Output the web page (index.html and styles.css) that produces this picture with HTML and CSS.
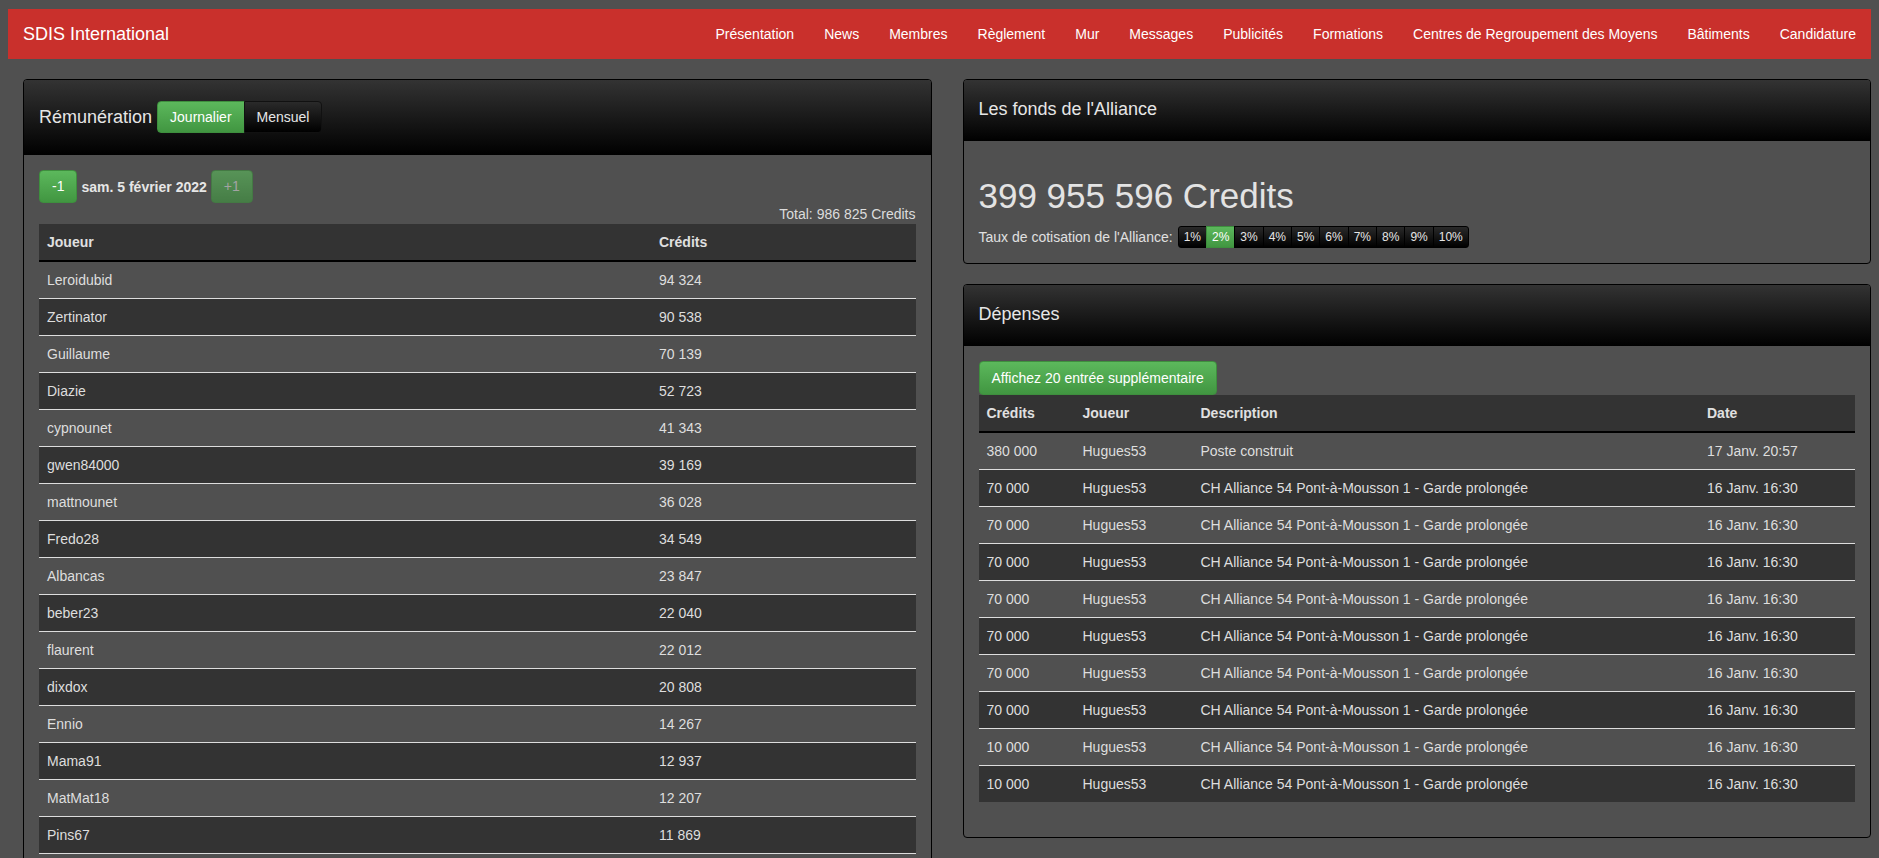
FILE: index.html
```html
<!DOCTYPE html>
<html lang="fr">
<head>
<meta charset="utf-8">
<title>SDIS International</title>
<link rel="stylesheet" href="styles.css">
</head>
<body>
<nav class="navbar">
  <a class="brand" href="#">SDIS International</a>
  <ul class="nav">
    <li><a href="#">Présentation</a></li>
    <li><a href="#">News</a></li>
    <li><a href="#">Membres</a></li>
    <li><a href="#">Règlement</a></li>
    <li><a href="#">Mur</a></li>
    <li><a href="#">Messages</a></li>
    <li><a href="#">Publicités</a></li>
    <li><a href="#">Formations</a></li>
    <li><a href="#">Centres de Regroupement des Moyens</a></li>
    <li><a href="#">Bâtiments</a></li>
    <li><a href="#">Candidature</a></li>
  </ul>
</nav>

<div class="row">
  <div class="col">
    <div class="panel">
      <div class="panel-heading heading-tools">
        <h3 class="panel-title">Rémunération</h3>
        <div class="btn-group">
          <a class="btn btn-success" href="#">Journalier</a>
          <a class="btn btn-dark" href="#">Mensuel</a>
        </div>
      </div>
      <div class="panel-body">
        <div class="day-nav">
          <a class="btn btn-success" href="#">-1</a>
          <strong class="day">sam. 5 février 2022</strong>
          <span class="btn btn-success disabled">+1</span>
        </div>
        <div class="total">Total: 986 825 Credits</div>
        <table class="table table-open">
          <thead>
            <tr><th class="w-player">Joueur</th><th>Crédits</th></tr>
          </thead>
          <tbody>
            <tr><td>Leroidubid</td><td>94 324</td></tr>
            <tr><td>Zertinator</td><td>90 538</td></tr>
            <tr><td>Guillaume</td><td>70 139</td></tr>
            <tr><td>Diazie</td><td>52 723</td></tr>
            <tr><td>cypnounet</td><td>41 343</td></tr>
            <tr><td>gwen84000</td><td>39 169</td></tr>
            <tr><td>mattnounet</td><td>36 028</td></tr>
            <tr><td>Fredo28</td><td>34 549</td></tr>
            <tr><td>Albancas</td><td>23 847</td></tr>
            <tr><td>beber23</td><td>22 040</td></tr>
            <tr><td>flaurent</td><td>22 012</td></tr>
            <tr><td>dixdox</td><td>20 808</td></tr>
            <tr><td>Ennio</td><td>14 267</td></tr>
            <tr><td>Mama91</td><td>12 937</td></tr>
            <tr><td>MatMat18</td><td>12 207</td></tr>
            <tr><td>Pins67</td><td>11 869</td></tr>
          </tbody>
        </table>
      </div>
    </div>
  </div>

  <div class="col">
    <div class="panel">
      <div class="panel-heading">
        <h3 class="panel-title">Les fonds de l'Alliance</h3>
      </div>
      <div class="panel-body">
        <h1 class="funds">399 955 596 Credits</h1>
        <div class="rate">
          <span class="rate-label">Taux de cotisation de l'Alliance:</span>
          <div class="btn-group btn-group-xs">
            <a class="btn btn-dark" href="#">1%</a>
            <a class="btn btn-success" href="#">2%</a>
            <a class="btn btn-dark" href="#">3%</a>
            <a class="btn btn-dark" href="#">4%</a>
            <a class="btn btn-dark" href="#">5%</a>
            <a class="btn btn-dark" href="#">6%</a>
            <a class="btn btn-dark" href="#">7%</a>
            <a class="btn btn-dark" href="#">8%</a>
            <a class="btn btn-dark" href="#">9%</a>
            <a class="btn btn-dark" href="#">10%</a>
          </div>
        </div>
      </div>
    </div>

    <div class="panel">
      <div class="panel-heading">
        <h3 class="panel-title">Dépenses</h3>
      </div>
      <div class="panel-body">
        <a class="btn btn-success btn-more" href="#">Affichez 20 entrée supplémentaire</a>
        <table class="table">
          <thead>
            <tr>
              <th class="w-credits">Crédits</th>
              <th class="w-joueur">Joueur</th>
              <th>Description</th>
              <th class="w-date">Date</th>
            </tr>
          </thead>
          <tbody>
            <tr><td>380 000</td><td>Hugues53</td><td>Poste construit</td><td>17 Janv. 20:57</td></tr>
            <tr><td>70 000</td><td>Hugues53</td><td>CH Alliance 54 Pont-à-Mousson 1 - Garde prolongée</td><td>16 Janv. 16:30</td></tr>
            <tr><td>70 000</td><td>Hugues53</td><td>CH Alliance 54 Pont-à-Mousson 1 - Garde prolongée</td><td>16 Janv. 16:30</td></tr>
            <tr><td>70 000</td><td>Hugues53</td><td>CH Alliance 54 Pont-à-Mousson 1 - Garde prolongée</td><td>16 Janv. 16:30</td></tr>
            <tr><td>70 000</td><td>Hugues53</td><td>CH Alliance 54 Pont-à-Mousson 1 - Garde prolongée</td><td>16 Janv. 16:30</td></tr>
            <tr><td>70 000</td><td>Hugues53</td><td>CH Alliance 54 Pont-à-Mousson 1 - Garde prolongée</td><td>16 Janv. 16:30</td></tr>
            <tr><td>70 000</td><td>Hugues53</td><td>CH Alliance 54 Pont-à-Mousson 1 - Garde prolongée</td><td>16 Janv. 16:30</td></tr>
            <tr><td>70 000</td><td>Hugues53</td><td>CH Alliance 54 Pont-à-Mousson 1 - Garde prolongée</td><td>16 Janv. 16:30</td></tr>
            <tr><td>10 000</td><td>Hugues53</td><td>CH Alliance 54 Pont-à-Mousson 1 - Garde prolongée</td><td>16 Janv. 16:30</td></tr>
            <tr><td>10 000</td><td>Hugues53</td><td>CH Alliance 54 Pont-à-Mousson 1 - Garde prolongée</td><td>16 Janv. 16:30</td></tr>
          </tbody>
        </table>
      </div>
    </div>
  </div>
</div>
</body>
</html>
```

FILE: styles.css
```css
* { box-sizing: border-box; }

html { background: #505050; }

body {
  margin: 8px;
  background: #505050;
  color: #dcdcdc;
  font-family: "Liberation Sans", Arial, sans-serif;
  font-size: 14px;
  line-height: 20px;
}

a { text-decoration: none; color: inherit; }

/* Navbar */
.navbar {
  display: flex;
  align-items: center;
  justify-content: space-between;
  height: 50px;
  margin: 1px -8px 20px 0;
  padding-right: 8px;
  background: #c9302c;
}
.brand {
  padding: 0 15px;
  font-size: 18px;
  line-height: 20px;
  color: #fff;
}
.nav {
  display: flex;
  list-style: none;
  margin: 0;
  padding: 0;
}
.nav a {
  display: block;
  padding: 15px 15px;
  color: #fff;
  line-height: 20px;
}

/* Layout */
.row {
  display: flex;
  align-items: flex-start;
  gap: 31px;
  padding-left: 15px;
}
.col {
  flex: 1 1 0;
  min-width: 0;
}

/* Panels */
.panel {
  border: 1px solid #000;
  border-radius: 4px;
  background: #505050;
  margin-bottom: 20px;
}
.panel-heading {
  padding: 19px 15px 21px;
  background: linear-gradient(to bottom, #333 0%, #000 100%);
  border-radius: 3px 3px 0 0;
}
.heading-tools {
  display: flex;
  align-items: center;
  gap: 5px;
  padding: 21px 15px 22px;
}
.panel-title {
  margin: 0;
  font-size: 18px;
  line-height: 21px;
  font-weight: normal;
  color: #e6e6e6;
}
.panel-body {
  padding: 15px;
}

/* Buttons */
.btn {
  display: inline-block;
  padding: 6px 12px;
  font-size: 14px;
  line-height: 19px;
  border: 1px solid transparent;
  border-radius: 4px;
  color: #fff;
  white-space: nowrap;
}
.btn-success {
  background: linear-gradient(to bottom, #5cb85c 0%, #419641 100%);
  border-color: #3e8f3e;
}
.btn-dark {
  background: linear-gradient(to bottom, #2a2a2a 0%, #000 100%);
  border-color: #111;
  color: #e6e6e6;
}
.btn.disabled {
  opacity: .65;
  color: #d0d0d0;
}
.btn-more {
  line-height: 20px;
}
.btn-group {
  display: inline-flex;
}
.btn-group .btn {
  border-radius: 0;
}
.btn-group .btn + .btn {
  margin-left: -1px;
}
.btn-group .btn:first-child {
  border-radius: 4px 0 0 4px;
}
.btn-group .btn:last-child {
  border-radius: 0 4px 4px 0;
}
.heading-tools .btn {
  padding: 5px 12px;
  line-height: 20px;
}
.btn-group-xs .btn {
  padding: 1px 5px;
  font-size: 12px;
  line-height: 18px;
  border-color: #000;
}
.btn-group-xs .btn:first-child { border-radius: 3px 0 0 3px; }
.btn-group-xs .btn:last-child { border-radius: 0 3px 3px 0; }
.btn-group-xs .btn-success { border-color: #3e8f3e; color: #fff; }

/* Day navigation */
.day-nav {
  display: flex;
  align-items: center;
  gap: 4px;
}
.day {
  font-weight: bold;
  color: #e6e6e6;
}
.total {
  text-align: right;
  line-height: 20px;
  margin-top: 1px;
}

/* Tables */
.table {
  width: 100%;
  border-collapse: collapse;
  margin-bottom: 20px;
}
.table th {
  background: #333;
  text-align: left;
  padding: 8px;
  line-height: 20px;
  font-weight: bold;
  color: #e0e0e0;
  border-bottom: 2px solid #000;
}
.table td {
  padding: 8px;
  line-height: 20px;
  border-top: 1px solid #ddd;
  color: #dedede;
}
.table tbody tr:first-child td {
  border-top: 0;
}
.table tbody tr:nth-child(even) td {
  background: #333;
}
.table-open tbody tr:last-child td {
  border-bottom: 1px solid #ddd;
}
.w-player { width: 612px; }
.w-credits { width: 96px; }
.w-joueur { width: 118px; }
.w-date { width: 156px; }

/* Funds */
.funds {
  margin: 20px 0 10px;
  font-size: 35px;
  line-height: 40px;
  font-weight: normal;
  color: #e3e3e3;
}
.rate {
  display: flex;
  align-items: center;
  gap: 5px;
}
.rate-label {
  color: #e0e0e0;
}
```
